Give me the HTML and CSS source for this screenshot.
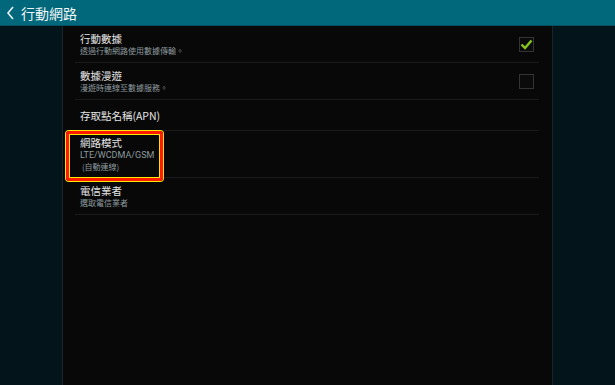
FILE: index.html
```html
<!DOCTYPE html>
<html lang="zh-Hant">
<head>
    <meta charset="UTF-8">
    <meta name="viewport" content="width=device-width, initial-scale=1.0">
    <title>行動網路</title>
    <link rel="stylesheet" href="styles.css">
</head>
<body>
    <header class="top-bar">
        <svg class="back" width="9" height="14" viewBox="0 0 9 14">
            <path d="M7 1 L2 7 L7 13" fill="none" stroke="#e8f2f4" stroke-width="1.6"/>
        </svg>
        <span class="top-title">行動網路</span>
    </header>

    <div class="screen">
        <div class="side"></div>
        <main class="panel">
            <ul class="settings">
                <li class="row">
                    <div class="row-text">
                        <div class="row-title">行動數據</div>
                        <div class="row-sub">透過行動網路使用數據傳輸。</div>
                    </div>
                    <span class="check on">
                        <svg width="13" height="11" viewBox="0 0 13 11">
                            <path d="M1.5 5.5 L5 9 L11.5 1.5" fill="none" stroke="#86c61d" stroke-width="2.4"/>
                        </svg>
                    </span>
                </li>
                <li class="row">
                    <div class="row-text">
                        <div class="row-title">數據漫遊</div>
                        <div class="row-sub">漫遊時連線至數據服務。</div>
                    </div>
                    <span class="check"></span>
                </li>
                <li class="row short">
                    <div class="row-text">
                        <div class="row-title">存取點名稱(APN)</div>
                    </div>
                </li>
                <li class="row tall">
                    <div class="row-text">
                        <div class="row-title">網路模式</div>
                        <div class="row-sub latin">LTE/WCDMA/GSM</div>
                        <div class="row-sub indent">(自動連線)</div>
                    </div>
                    <span class="mark"></span>
                </li>
                <li class="row">
                    <div class="row-text">
                        <div class="row-title">電信業者</div>
                        <div class="row-sub">選取電信業者</div>
                    </div>
                </li>
            </ul>
        </main>
        <div class="side"></div>
    </div>
</body>
</html>
```

FILE: styles.css
```css
* { box-sizing: border-box; }
html, body { height: 100%; }
body {
    margin: 0;
    background-color: #03141a;
    font-family: "Noto Sans CJK TC", Roboto, sans-serif;
    color: #e6e6e6;
    display: flex;
    flex-direction: column;
    overflow: hidden;
}
.top-bar {
    height: 26px;
    background-color: #00687a;
    border-bottom: 1px solid #00515f;
    display: flex;
    align-items: center;
    padding-left: 6px;
    gap: 6px;
}
.top-title {
    font-size: 14px;
    color: #f0f6f7;
    line-height: 1;
}
.screen {
    flex: 1;
    display: flex;
}
.side {
    width: 62px;
    background-color: #03141a;
}
.panel {
    width: 492px;
    background-color: #080808;
    border-left: 1px solid #17262b;
    border-right: 1px solid #17262b;
}
.settings {
    list-style: none;
    margin: 0 13px 0 12px;
    padding: 0;
}
.row {
    position: relative;
    display: flex;
    align-items: center;
    justify-content: space-between;
    height: 37px;
    padding-left: 5px;
    border-bottom: 1px solid #1a1a1a;
}
.row.short { height: 31px; }
.row.tall { height: 47px; }
.row-title {
    font-size: 10.5px;
    line-height: 13px;
    color: #e4e4e4;
}
.row-sub {
    font-size: 8px;
    line-height: 11px;
    color: #8c9a9e;
}
.row-sub.latin {
    font-family: Roboto, sans-serif;
    font-size: 9px;
    margin-top: 1px;
}
.row-sub.indent { padding-left: 2px; }
.check {
    width: 15px;
    height: 15px;
    margin-right: 5px;
    border: 1px solid #333;
    background-color: #0b0b0b;
    display: flex;
    align-items: center;
    justify-content: center;
}
.mark {
    position: absolute;
    left: -9px;
    top: 0;
    width: 97px;
    height: 50px;
    border: 3px solid #ff1a00;
    border-radius: 3px;
    box-shadow: 0 0 0 1px #ffe600, inset 0 0 0 1px #ffe600;
}
```
